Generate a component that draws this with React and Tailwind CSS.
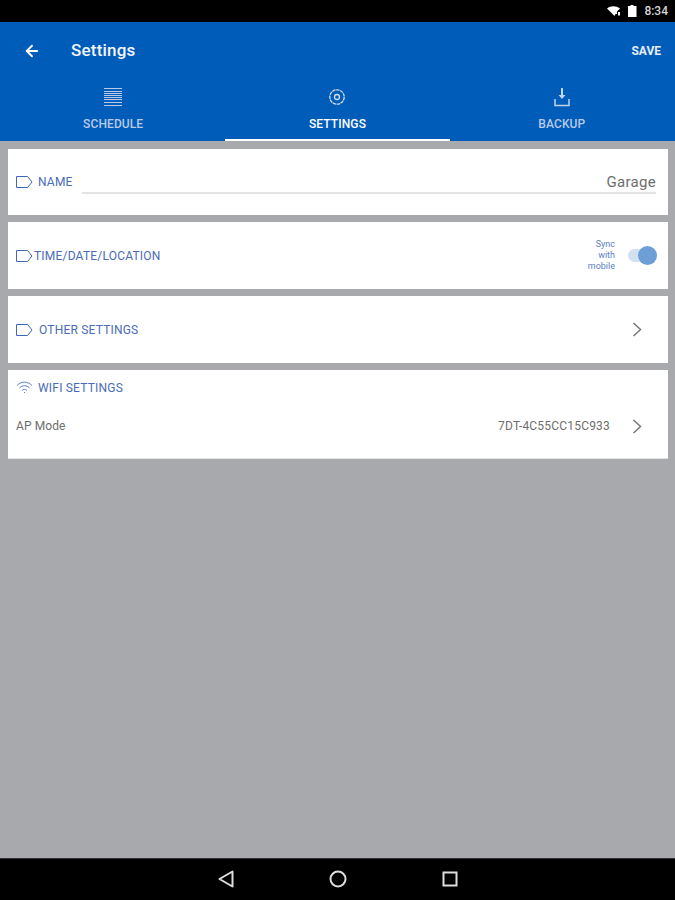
import React from 'react';
import { ArrowLeft } from 'lucide-react';

const font = { fontFamily: 'Roboto, sans-serif' };

const TagIcon = () => (
  <svg width="17" height="12" viewBox="0 0 17 12" fill="none" stroke="#3f66b8" strokeWidth="1" className="shrink-0">
    <path d="M.5 .5h11l4.500 5.500-4.500 5.500h-11z" />
  </svg>
);

const WifiIcon = () => (
  <svg width="17" height="12" viewBox="0 0 17 12" fill="none" stroke="#5b7fc4" strokeWidth="1" className="shrink-0">
    <path d="M1 4.500c4.500-4.500 10.500-4.500 15 0" />
    <path d="M3.500 7c3-3 7-3 10 0" />
    <path d="M6 9.500c1.500-1.500 3.500-1.500 5 0" />
    <path d="M8 11.500h1" />
  </svg>
);

const Chevron = ({ className = '' }) => (
  <svg width="10" height="15" viewBox="0 0 10 15" fill="none" stroke="#777777" strokeWidth="1.500" className={`shrink-0 ${className}`}>
    <path d="M1.500 1l7 6.500-7 6.500" />
  </svg>
);

const ScheduleIcon = () => (
  <svg width="18" height="18" viewBox="0 0 18 18" stroke="#b9c9e8" strokeWidth="1" fill="none">
    <path d="M0 .5h18M0 3.500h18M0 5.500h18M0 7.500h18M0 9.500h18M0 11.500h18M0 14.500h18M0 17.500h18" />
  </svg>
);

const GearIcon = () => (
  <svg width="18" height="18" viewBox="0 0 18 18" fill="none" stroke="#d5deef" strokeWidth="1.300">
    <circle cx="9" cy="9" r="7.200" strokeDasharray="3.500 .6" />
    <circle cx="9" cy="9" r="2.500" />
  </svg>
);

const BackupIcon = () => (
  <svg width="16" height="19" viewBox="0 0 16 19" fill="none" stroke="#c3d1eb" strokeWidth="1.500">
    <path d="M8 0v9" strokeWidth="2" />
    <path d="M4.500 7h7l-3.500 4z" fill="#c3d1eb" stroke="none" />
    <path d="M1 11v6.500h14v-6.500" />
  </svg>
);

const Tab = ({ icon, label, active }) => (
  <div className={`flex-1 flex flex-col items-center pt-[9px] border-b-2 ${active ? 'border-white' : 'border-transparent'}`}>
    <div className="h-[18px] flex items-center">{icon}</div>
    <span className={`mt-[11px] text-[12px] leading-[14px] tracking-[0.1px] font-medium ${active ? 'text-white' : 'text-[#b9c9e8]'}`}>{label}</span>
  </div>
);

const Card = ({ children, className = '' }) => (
  <div className={`bg-white ml-2 mr-[7px] flex ${className}`}>{children}</div>
);

const Label = ({ children }) => (
  <span className="text-[12px] leading-[14px] tracking-[0.2px] text-[#4a6bb8]">{children}</span>
);

export default function App() {
  return (
    <div className="w-[675px] h-[900px] flex flex-col bg-[#a7a9ac]" style={font}>
      {/* status bar */}
      <div className="h-[22px] bg-black flex items-center justify-end pr-[7px] gap-[7px] shrink-0">
        <svg width="14" height="10" viewBox="0 0 14 10" fill="white">
          <path d="M0 2.500c3.500-3 9-3 13 0l-3 3v2.500h-1.500l-1 2z" />
          <rect x="11" y="6" width="2" height="3.500" />
        </svg>
        <svg width="9" height="12" viewBox="0 0 9 12" fill="white">
          <path d="M2.500 1v-1h3v1h3v11h-8.500v-11z" />
        </svg>
        <span className="text-[12px] font-medium text-[#d5d5d5] leading-none">8:34</span>
      </div>

      {/* header */}
      <div className="h-[119px] bg-[#005cb9] shrink-0 flex flex-col">
        <div className="h-[57px] flex items-center pl-[23px] pr-[14px]">
          <ArrowLeft size={18} strokeWidth={2.500} className="text-white" />
          <span className="ml-[30px] text-[17px] tracking-[0.2px] font-medium text-[#f3f6fc]">Settings</span>
          <span className="ml-auto text-[12px] font-bold text-[#e8eef9]">SAVE</span>
        </div>
        <div className="flex-1 flex px-[1px]">
          <Tab icon={<ScheduleIcon />} label="SCHEDULE" />
          <Tab icon={<GearIcon />} label="SETTINGS" active />
          <Tab icon={<BackupIcon />} label="BACKUP" />
        </div>
      </div>

      {/* cards */}
      <div className="pt-2 flex flex-col gap-[7px]">
        <Card className="h-[66px] items-center pl-[8px] pr-3">
          <TagIcon />
          <span className="ml-[5px] mb-[2px]"><Label>NAME</Label></span>
          <div className="ml-[9px] flex-1 border-b-2 border-[#e3e3e3] h-[24px] text-right text-[15px] tracking-[0.3px] leading-[24px] text-[#6e6e6e]">Garage</div>
        </Card>

        <Card className="h-[67px] items-center pl-[8px] pr-[11px]">
          <TagIcon />
          <span className="ml-[1px] mb-[1px]"><Label>TIME/DATE/LOCATION</Label></span>
          <div className="ml-auto w-[30px] text-right text-[9px] leading-[11px] text-[#5b7fc4]">Sync<br />with<br />mobile</div>
          <div className="relative ml-[13px] w-[29px] h-[13px] rounded-full bg-[#d3e0ef]">
            <div className="absolute right-0 top-[-3px] w-[19px] h-[19px] rounded-full bg-[#6b9fd6]" />
          </div>
        </Card>

        <Card className="h-[67px] items-center pl-[8px] pr-[26px]">
          <TagIcon />
          <span className="ml-[6px] mb-[1px]"><Label>OTHER SETTINGS</Label></span>
          <Chevron className="ml-auto" />
        </Card>

        <Card className="h-[89px] flex-col pl-[8px] pr-[26px] border-b border-[#e3e3e3]">
          <div className="flex items-center mt-[5px]">
            <WifiIcon />
            <span className="ml-[5px]"><Label>WIFI SETTINGS</Label></span>
          </div>
          <div className="flex items-center mt-[19px] text-[12px] leading-[16px] text-[#6e6e6e]">
            <span className="tracking-[0.1px]">AP Mode</span>
            <span className="ml-auto tracking-[0.2px]">7DT-4C55CC15C933</span>
            <Chevron className="ml-[22px]" />
          </div>
        </Card>
      </div>

      {/* nav bar */}
      <div className="mt-auto h-[42px] pb-[2px] bg-black border-t border-[#333333] flex items-center justify-center gap-[95px] shrink-0">
        <svg width="16" height="18" viewBox="0 0 16 18" fill="none" stroke="#dddddd" strokeWidth="2">
          <path d="M14.500 1.500v15l-13-7.500z" strokeLinejoin="round" />
        </svg>
        <svg width="18" height="18" viewBox="0 0 18 18" fill="none" stroke="#dddddd" strokeWidth="2">
          <circle cx="9" cy="9" r="7.500" />
        </svg>
        <svg width="16" height="16" viewBox="0 0 16 16" fill="none" stroke="#dddddd" strokeWidth="2">
          <rect x="1.500" y="1.500" width="13" height="13" />
        </svg>
      </div>
    </div>
  );
}
